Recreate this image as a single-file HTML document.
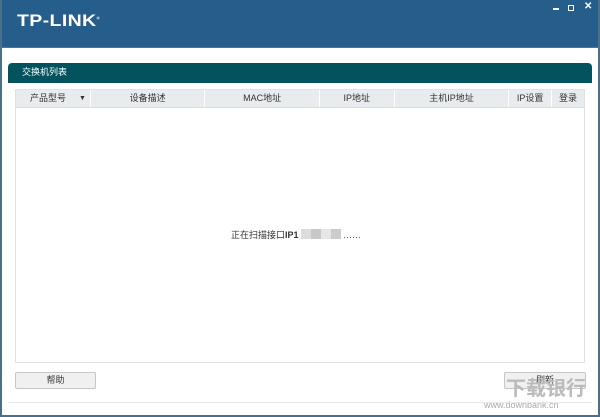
<!DOCTYPE html>
<html><head><meta charset="utf-8"><style>
*{margin:0;padding:0;box-sizing:border-box}
body{width:600px;height:417px;overflow:hidden;background:#fff;font-family:"Liberation Sans","Noto Sans CJK SC",sans-serif;font-size:9px;color:#333;position:relative}
.frame{position:absolute;inset:0;border:2px solid #4a6f8a;border-top:none}
.top{position:absolute;left:0;top:0;width:600px;height:48px;background:#265e8b;border-bottom:1px solid #4b7596}
.logo{position:absolute;left:17px;top:11px;color:#fff;font-weight:bold;font-size:17px;letter-spacing:0.3px;transform:scaleX(1.15);transform-origin:left}
.ctl{position:absolute;top:5px;background:#fff}
.ph{position:absolute;left:8px;top:63px;width:584px;height:20px;background:#03535f;border-radius:4px 4px 0 0;color:#fff;padding:4px 0 0 14px;font-size:9px;line-height:11px}
.tbl{position:absolute;left:15px;top:89px;width:570px;height:274px;border:1px solid #dfe3e6}
.th{height:18px;background:#e8ecef;display:flex;border-bottom:1px solid #d8dde0}
.th div{border-right:1px solid #fff;text-align:center;line-height:17px;font-size:9px;color:#333;position:relative}
.msg{position:absolute;left:231px;top:229px;font-size:9px;line-height:11px;color:#333}
.btn{position:absolute;top:372px;height:17px;border:1px solid #c4c8cb;border-radius:2px;background:#f0f0f0;text-align:center;font-size:9px;line-height:14px}
.line{position:absolute;left:8px;top:402px;width:584px;height:1px;background:#e6e9eb}
.wm{position:absolute;left:506px;top:372px;color:#bbb;font-size:20px;font-weight:bold}
.wm2{position:absolute;left:484px;top:400px;color:#aaa;font-size:9px}
</style></head><body>
<div class="top"><div class="logo">TP-LINK<sup style="font-size:4px">®</sup></div>
<div class="ctl" style="left:553px;top:8px;width:6px;height:2px"></div>
<div class="ctl" style="left:568px;top:5px;width:6px;height:6px;border:1.5px solid #fff;background:none"></div>
<div style="position:absolute;left:584px;top:1px;color:#fff;font-size:10px;font-weight:bold">✕</div></div>
<div class="frame"></div>
<div class="ph">交换机列表</div>
<div class="tbl"><div class="th">
<div style="width:75px;text-align:left;padding-left:14px">产品型号<span style="position:absolute;left:63px;font-size:7px">▼</span></div>
<div style="width:115px">设备描述</div>
<div style="width:115px">MAC地址</div>
<div style="width:75px">IP地址</div>
<div style="width:115px">主机IP地址</div>
<div style="width:43px">IP设置</div>
<div style="width:32px;border:none">登录</div>
</div></div>
<div class="msg">正在扫描接口<b>IP1</b><span style="display:inline-block;width:10px;height:10px;background:#ddd;vertical-align:-1px;margin-left:2px"></span><span style="display:inline-block;width:10px;height:10px;background:#c8c8c8;vertical-align:-1px"></span><span style="display:inline-block;width:10px;height:10px;background:#e6e6e6;vertical-align:-1px"></span><span style="display:inline-block;width:10px;height:10px;background:#ccc;vertical-align:-1px"></span> ……</div>
<div class="btn" style="left:15px;width:81px">帮助</div>
<div class="btn" style="left:504px;width:82px">刷新</div>
<div class="wm">下载银行</div><div class="wm2">www.downbank.cn</div>
<div class="line"></div>
</body></html>
